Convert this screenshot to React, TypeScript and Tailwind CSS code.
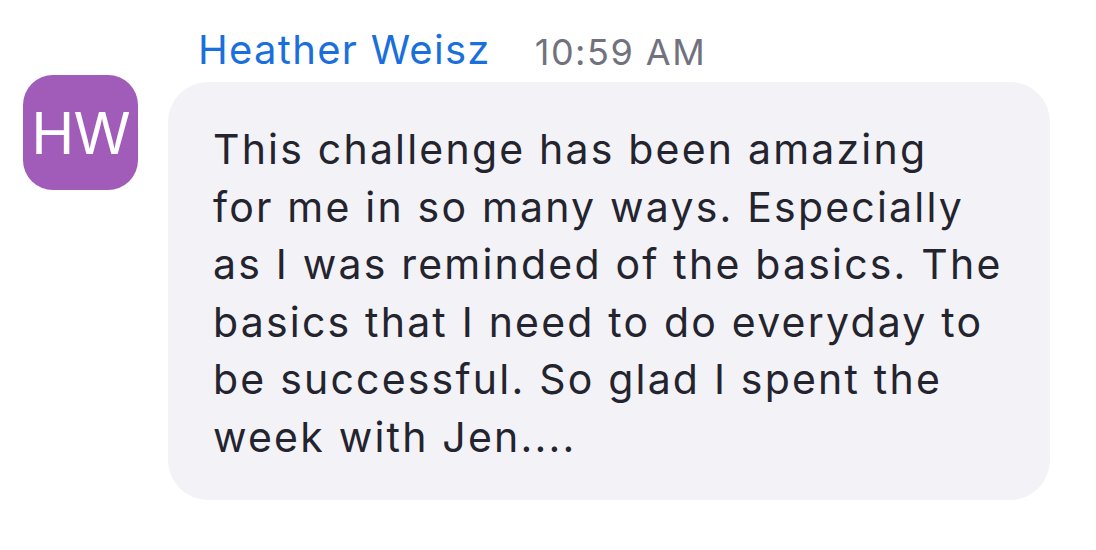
import React from "react";

const lines = [
  "This challenge has been amazing",
  "for me in so many ways. Especially",
  "as I was reminded of the basics. The",
  "basics that I need to do everyday to",
  "be successful. So glad I spent the",
  "week with Jen....",
];

export default function App() {
  return (
    <div
      className="w-[1096px] h-[550px] bg-white flex"
      style={{ fontFamily: "Inter, 'Liberation Sans', sans-serif" }}
    >
      <div className="pl-[23px] pt-[75px]">
        <div className="w-[115px] h-[115px] rounded-[30px] bg-[#a15cba] flex items-center justify-center text-white text-[58px] leading-none tracking-[-1px]">
          HW
        </div>
      </div>
      <div className="ml-[30px] flex flex-col">
        <div className="h-[82px] flex items-end pb-[12px] pl-[30px]">
          <span className="text-[#1a6fdc] text-[40px] leading-none tracking-[1.3px]">Heather Weisz</span>
          <span className="ml-[44px] text-[#72727f] text-[36px] leading-none tracking-[1.5px]">10:59 AM</span>
        </div>
        <div className="w-[882px] bg-[#f2f2f7] rounded-[40px] pl-[45px] pt-[39px] pb-[34px] text-[#24242f] text-[41px] leading-[57.5px] tracking-[2.2px]">
          {lines.map((l) => (
            <div key={l} className="whitespace-nowrap">
              {l}
            </div>
          ))}
        </div>
      </div>
    </div>
  );
}
